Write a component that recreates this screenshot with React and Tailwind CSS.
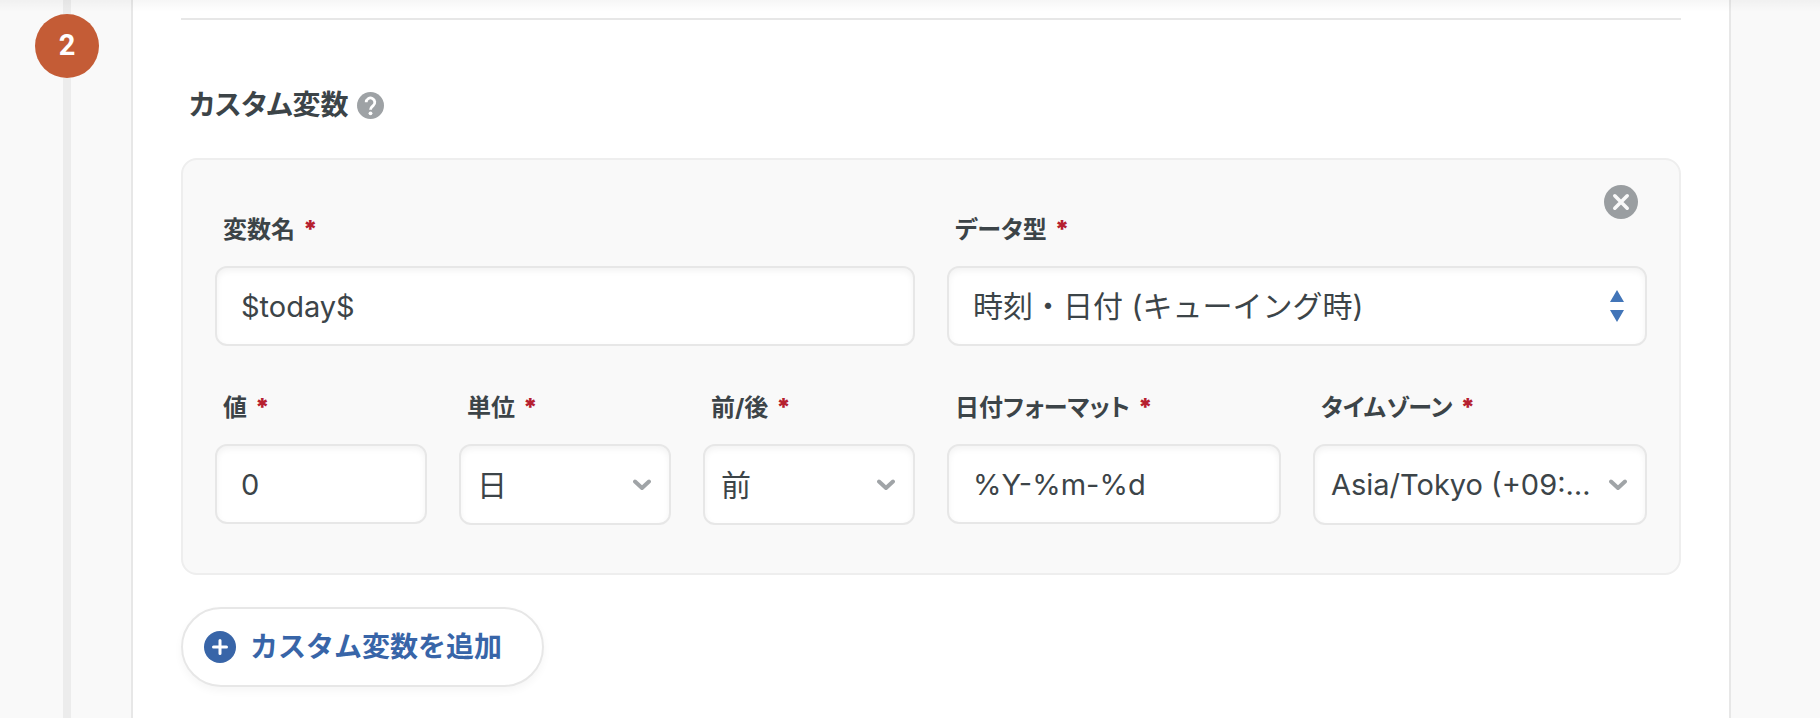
import { useState } from "react";

const CONTROL =
  "w-full rounded-xl border-2 border-[#e7e7e7] bg-white leading-9 text-[#3c4448] shadow-[inset_0_3px_6px_rgba(0,0,0,0.05)] focus:border-[#4275b8] focus:outline-none";

function Field({ id, label, children }) {
  return (
    <div>
      <label
        htmlFor={id}
        className="mb-5 flex gap-2 pl-2 text-2xl leading-8 font-bold text-[#3c4448]"
      >
        <span className="[font-feature-settings:'palt']">{label}</span>
        <span className="font-black text-[#b6202f]">*</span>
      </label>
      {children}
    </div>
  );
}

function TextInput({ id, value, onChange }) {
  return (
    <input
      id={id}
      type="text"
      className={`${CONTROL} h-20 px-6 text-[29px]`}
      value={value}
      onChange={(e) => onChange(e.target.value)}
    />
  );
}

function Select({ id, options, value, onChange, textClass = "text-[30px]" }) {
  return (
    <div className="relative">
      <select
        id={id}
        className={`${CONTROL} ${textClass} h-[81px] appearance-none pr-12 pl-4 text-ellipsis`}
        value={value}
        onChange={(e) => onChange(e.target.value)}
      >
        {options.map((o) => (
          <option key={o}>{o}</option>
        ))}
      </select>
      <svg
        className="pointer-events-none absolute inset-y-0 right-5 my-auto h-3 w-[18px]"
        viewBox="0 0 18 12"
        fill="none"
        stroke="#a0a4a7"
        strokeWidth="4"
        strokeLinecap="round"
        strokeLinejoin="round"
      >
        <path d="M2 2.5l7 6.5 7-6.5" />
      </svg>
    </div>
  );
}

function SortSelect({ id, options, value, onChange }) {
  return (
    <div className="relative">
      <select
        id={id}
        className={`${CONTROL} h-20 appearance-none pr-14 pl-6 text-[30px] text-ellipsis`}
        value={value}
        onChange={(e) => onChange(e.target.value)}
      >
        {options.map((o) => (
          <option key={o}>{o}</option>
        ))}
      </select>
      <svg
        className="pointer-events-none absolute inset-y-0 right-[23px] my-auto h-8 w-3.5"
        viewBox="0 0 14 32"
        fill="#4275b8"
      >
        <path d="M7 0l7 12H0zM7 32L0 20h14z" />
      </svg>
    </div>
  );
}

export default function App() {
  const [variable, setVariable] = useState({
    name: "$today$",
    type: "時刻・日付 (キューイング時)",
    value: "0",
    unit: "日",
    direction: "前",
    format: "%Y-%m-%d",
    timezone: "Asia/Tokyo (+09:00)",
  });

  const set = (key) => (v) => setVariable({ ...variable, [key]: v });

  return (
    <div className="relative flex min-h-screen bg-[#f9f9f9] font-['Inter','Noto_Sans_CJK_JP',sans-serif] text-[#3c4448]">
      {/* Header shadow */}
      <div className="pointer-events-none absolute inset-x-0 top-0 z-10 h-3 bg-gradient-to-b from-black/[0.035] to-transparent" />

      {/* Step timeline */}
      <aside className="w-[131px] shrink-0 pl-[35px]">
        <div className="flex h-full w-16 flex-col items-center">
          <div className="h-3.5 w-2 bg-[#ececec]" />
          <div className="flex h-16 w-16 items-center justify-center rounded-full bg-[#c45c36] pb-0.5 font-['Roboto',sans-serif] text-[29px] leading-9 font-bold text-white">
            2
          </div>
          <div className="w-2 flex-1 bg-[#ececec]" />
        </div>
      </aside>

      <main className="mr-[89px] min-w-0 flex-1 border-x-2 border-[#e7e7e7] bg-white px-12 pt-[18px]">
        <hr className="border-t-2 border-[#e7e7e7]" />

        <div className="mt-[67px] flex items-center gap-2 pl-2">
          <h2 className="text-[28px] leading-9 font-bold [font-feature-settings:'palt']">
            カスタム変数
          </h2>
          <button type="button" aria-label="ヘルプ">
            <svg className="h-[27px] w-[27px]" viewBox="0 0 27 27" fill="none">
              <circle cx="13.5" cy="13.5" r="13.5" fill="#9ea2a5" />
              <path
                d="M9.2 10.2a4.3 4.3 0 1 1 7 3.4c-1.7 1.4-2.7 1.9-2.7 4.2"
                stroke="#fff"
                strokeWidth="2.8"
              />
              <circle cx="13.5" cy="21.3" r="1.9" fill="#fff" />
            </svg>
          </button>
        </div>

        {/* Variable card */}
        <section className="relative mt-[35px] rounded-2xl border-2 border-[#eeeeee] bg-[#f9f9f9] px-8 pt-[54px] pb-12">
          <button
            type="button"
            aria-label="削除"
            className="absolute top-[25px] right-[41px]"
          >
            <svg className="h-[34px] w-[34px]" viewBox="0 0 34 34" fill="none">
              <circle cx="17" cy="17" r="17" fill="#9a9ea1" />
              <path
                d="M10.8 10.8l12.4 12.4M23.2 10.8L10.8 23.2"
                stroke="#f9f9f9"
                strokeWidth="3.6"
                strokeLinecap="round"
              />
            </svg>
          </button>

          <div className="grid grid-cols-2 gap-x-8 gap-y-[46px]">
            <Field id="name" label="変数名">
              <TextInput id="name" value={variable.name} onChange={set("name")} />
            </Field>
            <Field id="type" label="データ型">
              <SortSelect
                id="type"
                options={["時刻・日付 (キューイング時)", "文字列"]}
                value={variable.type}
                onChange={set("type")}
              />
            </Field>

            <div className="grid grid-cols-3 gap-8">
              <Field id="value" label="値">
                <TextInput id="value" value={variable.value} onChange={set("value")} />
              </Field>
              <Field id="unit" label="単位">
                <Select
                  id="unit"
                  options={["日", "時間", "分"]}
                  value={variable.unit}
                  onChange={set("unit")}
                />
              </Field>
              <Field id="direction" label="前/後">
                <Select
                  id="direction"
                  options={["前", "後"]}
                  value={variable.direction}
                  onChange={set("direction")}
                />
              </Field>
            </div>

            <div className="grid grid-cols-2 gap-8">
              <Field id="format" label="日付フォーマット">
                <TextInput id="format" value={variable.format} onChange={set("format")} />
              </Field>
              <Field id="timezone" label="タイムゾーン">
                <Select
                  id="timezone"
                  options={["Asia/Tokyo (+09:00)", "UTC (+00:00)"]}
                  value={variable.timezone}
                  onChange={set("timezone")}
                  textClass="text-[29px]"
                />
              </Field>
            </div>
          </div>
        </section>

        <button
          type="button"
          className="mt-8 flex h-20 items-center gap-3.5 rounded-full border-2 border-[#e7e7e7] bg-white pr-10 pl-[21px] text-[28px] leading-9 font-bold text-[#3865a8] shadow-[0_4px_8px_rgba(0,0,0,0.04)]"
        >
          <svg className="h-8 w-8" viewBox="0 0 32 32" fill="none">
            <circle cx="16" cy="16" r="16" fill="#3865a8" />
            <path
              d="M16 9.5v13M9.5 16h13"
              stroke="#fff"
              strokeWidth="3"
              strokeLinecap="round"
            />
          </svg>
          カスタム変数を追加
        </button>
      </main>
    </div>
  );
}
